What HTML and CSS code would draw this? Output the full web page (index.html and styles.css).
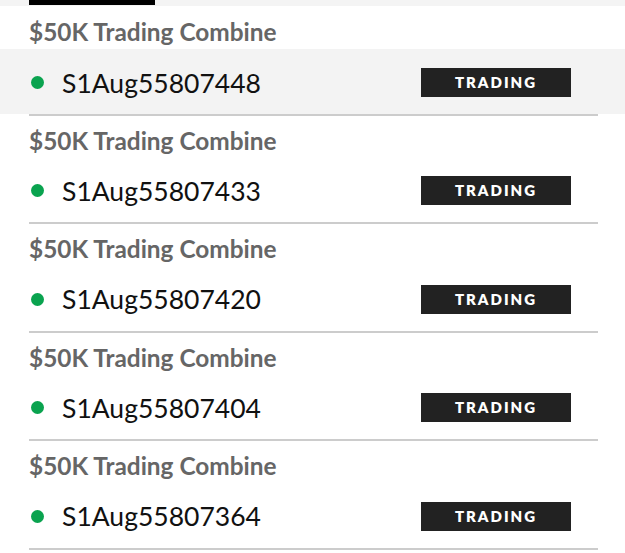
FILE: index.html
```html
<!DOCTYPE html>
<html lang="en">
<head>
    <meta charset="UTF-8">
    <meta name="viewport" content="width=device-width, initial-scale=1.0">
    <title>Accounts</title>
    <link rel="stylesheet" href="styles.css">
</head>
<body>

<div class="tabs">
    <div class="tab-active"></div>
</div>

<ul class="accounts">
    <li class="account active">
        <div class="account-name">$50K Trading Combine</div>
        <div class="account-row">
            <span class="status-dot"></span>
            <span class="account-id">S1Aug55807448</span>
            <span class="badge">TRADING</span>
        </div>
    </li>
    <li class="account">
        <div class="account-name">$50K Trading Combine</div>
        <div class="account-row">
            <span class="status-dot"></span>
            <span class="account-id">S1Aug55807433</span>
            <span class="badge">TRADING</span>
        </div>
    </li>
    <li class="account">
        <div class="account-name">$50K Trading Combine</div>
        <div class="account-row">
            <span class="status-dot"></span>
            <span class="account-id">S1Aug55807420</span>
            <span class="badge">TRADING</span>
        </div>
    </li>
    <li class="account">
        <div class="account-name">$50K Trading Combine</div>
        <div class="account-row">
            <span class="status-dot"></span>
            <span class="account-id">S1Aug55807404</span>
            <span class="badge">TRADING</span>
        </div>
    </li>
    <li class="account">
        <div class="account-name">$50K Trading Combine</div>
        <div class="account-row">
            <span class="status-dot"></span>
            <span class="account-id">S1Aug55807364</span>
            <span class="badge">TRADING</span>
        </div>
    </li>
</ul>

</body>
</html>
```

FILE: styles.css
```css
/* Page */
body {
    font-family: 'Lato', 'Noto Sans', sans-serif;
    background-color: #ffffff;
    margin: 0;
    padding: 0;
}

/* Tab strip at the top */
.tabs {
    height: 6px;
    background-color: #f4f4f4;
    padding-left: 29px;
}

.tab-active {
    width: 126px;
    height: 5px;
    background-color: #000;
}

/* Account list */
.accounts {
    list-style: none;
    margin: 0;
    padding: 0;
}

.account {
    margin: 0 27px 0 29px;
    border-bottom: 2px solid #cccccc;
}

.account-name {
    height: 41.4px;
    padding-top: 11px;
    box-sizing: border-box;
    font-size: 24.4px;
    font-weight: 700;
    line-height: 28px;
    color: #666666;
}

.account:first-child .account-name {
    height: 43px;
    padding-top: 12px;
}

.account-row {
    display: flex;
    align-items: center;
    height: 65px;
    padding: 2px 27px 0 2px;
    box-sizing: border-box;
}

.account.active .account-row {
    margin: 0 -27px 0 -29px;
    padding: 2px 54px 0 31px;
    background-color: #f3f3f3;
}

.status-dot {
    width: 13px;
    height: 13px;
    border-radius: 50%;
    background-color: #0aa34f;
    margin-right: 18px;
}

.account-id {
    flex: 1;
    font-size: 26.5px;
    color: #111111;
}

.badge {
    width: 150px;
    height: 29px;
    line-height: 29px;
    text-align: center;
    background-color: #222222;
    color: #ffffff;
    font-size: 15px;
    font-weight: 800;
    letter-spacing: 2px;
}
```
